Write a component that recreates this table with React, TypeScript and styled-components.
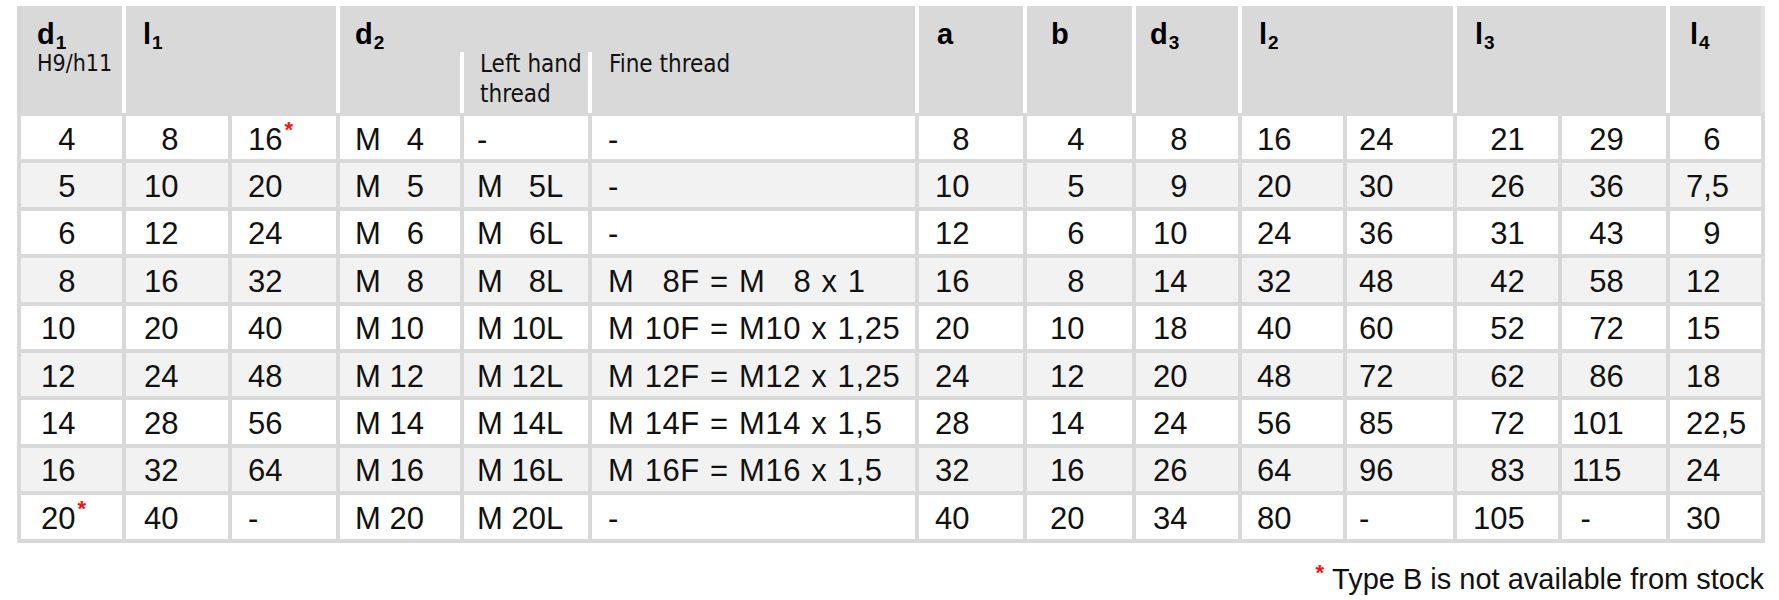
import React from "react";
import styled, { createGlobalStyle } from "styled-components";

const GlobalStyle = createGlobalStyle`
  html, body {
    margin: 0;
    padding: 0;
    background: #ffffff;
  }
  body {
    font-family: "Liberation Sans", Arial, sans-serif;
    color: #111;
  }
`;

const COLS = [101, 102, 104, 120, 124, 323, 104, 105, 102, 101, 106, 101, 104, 91];
const TEMPLATE = COLS.map((c) => `${c}px`).join(" ");
const BODY_PAD = [20, 18, 16, 15, 13, 16, 16, 23, 17, 15, 12, 16, 10, 16];
const WIDE_COL = 5;

const FS = "\u2007";

const ROWS: string[][] = [
  [FS + "4", FS + "8", "16*", "M " + FS + "4", "-", "-", FS + "8", FS + "4", FS + "8", "16", "24", FS + "21", FS + "29", FS + "6"],
  [FS + "5", "10", "20", "M " + FS + "5", "M " + FS + "5L", "-", "10", FS + "5", FS + "9", "20", "30", FS + "26", FS + "36", "7,5"],
  [FS + "6", "12", "24", "M " + FS + "6", "M " + FS + "6L", "-", "12", FS + "6", "10", "24", "36", FS + "31", FS + "43", FS + "9"],
  [FS + "8", "16", "32", "M " + FS + "8", "M " + FS + "8L", "M " + FS + "8F = M " + FS + "8 x 1", "16", FS + "8", "14", "32", "48", FS + "42", FS + "58", "12"],
  ["10", "20", "40", "M 10", "M 10L", "M 10F = M10 x 1,25", "20", "10", "18", "40", "60", FS + "52", FS + "72", "15"],
  ["12", "24", "48", "M 12", "M 12L", "M 12F = M12 x 1,25", "24", "12", "20", "48", "72", FS + "62", FS + "86", "18"],
  ["14", "28", "56", "M 14", "M 14L", "M 14F = M14 x 1,5", "28", "14", "24", "56", "85", FS + "72", "101", "22,5"],
  ["16", "32", "64", "M 16", "M 16L", "M 16F = M16 x 1,5", "32", "16", "26", "64", "96", FS + "83", "115", "24"],
  ["20*", "40", "-", "M 20", "M 20L", "-", "40", "20", "34", "80", "-", "105", "\u00a0-", "30"],
];

const Page = styled.div`
  width: 1779px;
  height: 600px;
  padding: 6px 0 0 17px;
  box-sizing: border-box;
  display: flex;
  flex-direction: column;
  align-items: flex-start;
`;

const TableWrap = styled.div`
  display: flex;
  flex-direction: column;
  width: 1748px;
`;

const HeaderGrid = styled.div`
  display: grid;
  grid-template-columns: ${TEMPLATE};
  grid-template-rows: 46px 61px;
  column-gap: 4px;
  row-gap: 0;
  background: #ffffff;
  border-left: 4px solid #d6d6d6;
  border-right: 4px solid #e2e2e2;
`;

const HeadCell = styled.div<{ $col: string; $row: string; $pad: number }>`
  grid-column: ${(p) => p.$col};
  grid-row: ${(p) => p.$row};
  background: #d9d9d9;
  padding: 13px 4px 0 ${(p) => p.$pad}px;
  box-sizing: border-box;
`;

const SubHeadCell = styled.div<{ $col: number; $pad: number }>`
  grid-column: ${(p) => p.$col};
  grid-row: 2;
  background: #d9d9d9;
  padding: 0 4px 0 ${(p) => p.$pad}px;
  font-family: "Liberation Sans Narrow", "Arial Narrow", "DejaVu Sans Condensed", sans-serif;
  font-size: 24px;
  line-height: 30px;
  color: #111;
`;

const SubHeadText = styled.div`
  margin-top: -3px;
`;

const Sym = styled.div`
  font-family: "Liberation Sans", Arial, sans-serif;
  font-weight: 700;
  font-size: 29px;
  line-height: 30px;
  color: #000;
  white-space: nowrap;
`;

const Sub = styled.span`
  font-size: 19px;
  position: relative;
  top: 5px;
  margin-left: 1px;
`;

const Tol = styled.div`
  font-family: "Liberation Sans Narrow", "Arial Narrow", "DejaVu Sans Condensed", sans-serif;
  font-size: 23px;
  line-height: 28px;
  margin-top: -4px;
  color: #111;
`;

const BodyGrid = styled.div`
  display: grid;
  grid-template-columns: ${TEMPLATE};
  grid-auto-rows: 43.4px;
  gap: 4px;
  padding: 3px 4px 4px 4px;
  background: #d9d9d9;
`;

const Cell = styled.div<{ $alt: boolean; $pad: number; $wide: boolean }>`
  background: ${(p) => (p.$alt ? "#f2f2f2" : "#ffffff")};
  display: flex;
  align-items: center;
  padding: 4px 2px 0 ${(p) => p.$pad}px;
  font-size: 31px;
  word-spacing: ${(p) => (p.$wide ? 1 : 0)}px;
  letter-spacing: ${(p) => (p.$wide ? 0.6 : 0)}px;
  white-space: pre;
  color: #111;
`;

const Star = styled.span`
  color: #ff1010;
  font-weight: 700;
  font-size: 22px;
  position: relative;
  top: -10px;
  margin-left: 2px;
`;

const Footnote = styled.div`
  align-self: flex-end;
  margin-right: 15px;
  margin-top: 20px;
  font-size: 29px;
  color: #111;
  white-space: nowrap;
`;

const FootStar = styled.span`
  color: #ff1010;
  font-weight: 700;
  font-size: 22px;
  position: relative;
  top: -9px;
  margin-right: 8px;
`;

function renderValue(v: string) {
  if (v.endsWith("*")) {
    return (
      <>
        {v.slice(0, -1)}
        <Star>*</Star>
      </>
    );
  }
  return v;
}

const Label = ({ main, sub }: { main: string; sub?: string }) => (
  <Sym>
    {main}
    {sub && <Sub>{sub}</Sub>}
  </Sym>
);

export default function App() {
  return (
    <>
      <GlobalStyle />
      <Page>
        <TableWrap>
          <HeaderGrid>
            <HeadCell $col="1" $row="1 / 3" $pad={16}>
              <Label main="d" sub="1" />
              <Tol>H9/h11</Tol>
            </HeadCell>
            <HeadCell $col="2 / 4" $row="1 / 3" $pad={17}>
              <Label main="l" sub="1" />
            </HeadCell>
            <HeadCell $col="4 / 7" $row="1" $pad={15}>
              <Label main="d" sub="2" />
            </HeadCell>
            <SubHeadCell $col={4} $pad={15} />
            <SubHeadCell $col={5} $pad={16}>
              <SubHeadText>
                Left hand
                <br />
                thread
              </SubHeadText>
            </SubHeadCell>
            <SubHeadCell $col={6} $pad={17}>
              <SubHeadText>Fine thread</SubHeadText>
            </SubHeadCell>
            <HeadCell $col="7" $row="1 / 3" $pad={18}>
              <Label main="a" />
            </HeadCell>
            <HeadCell $col="8" $row="1 / 3" $pad={24}>
              <Label main="b" />
            </HeadCell>
            <HeadCell $col="9" $row="1 / 3" $pad={14}>
              <Label main="d" sub="3" />
            </HeadCell>
            <HeadCell $col="10 / 12" $row="1 / 3" $pad={17}>
              <Label main="l" sub="2" />
            </HeadCell>
            <HeadCell $col="12 / 14" $row="1 / 3" $pad={18}>
              <Label main="l" sub="3" />
            </HeadCell>
            <HeadCell $col="14" $row="1 / 3" $pad={20}>
              <Label main="l" sub="4" />
            </HeadCell>
          </HeaderGrid>
          <BodyGrid>
            {ROWS.map((row, r) =>
              row.map((v, c) => (
                <Cell
                  key={`${r}-${c}`}
                  $alt={r % 2 === 1}
                  $pad={BODY_PAD[c]}
                  $wide={c === WIDE_COL}
                >
                  {renderValue(v)}
                </Cell>
              ))
            )}
          </BodyGrid>
        </TableWrap>
        <Footnote>
          <FootStar>*</FootStar>Type B is not available from stock
        </Footnote>
      </Page>
    </>
  );
}
